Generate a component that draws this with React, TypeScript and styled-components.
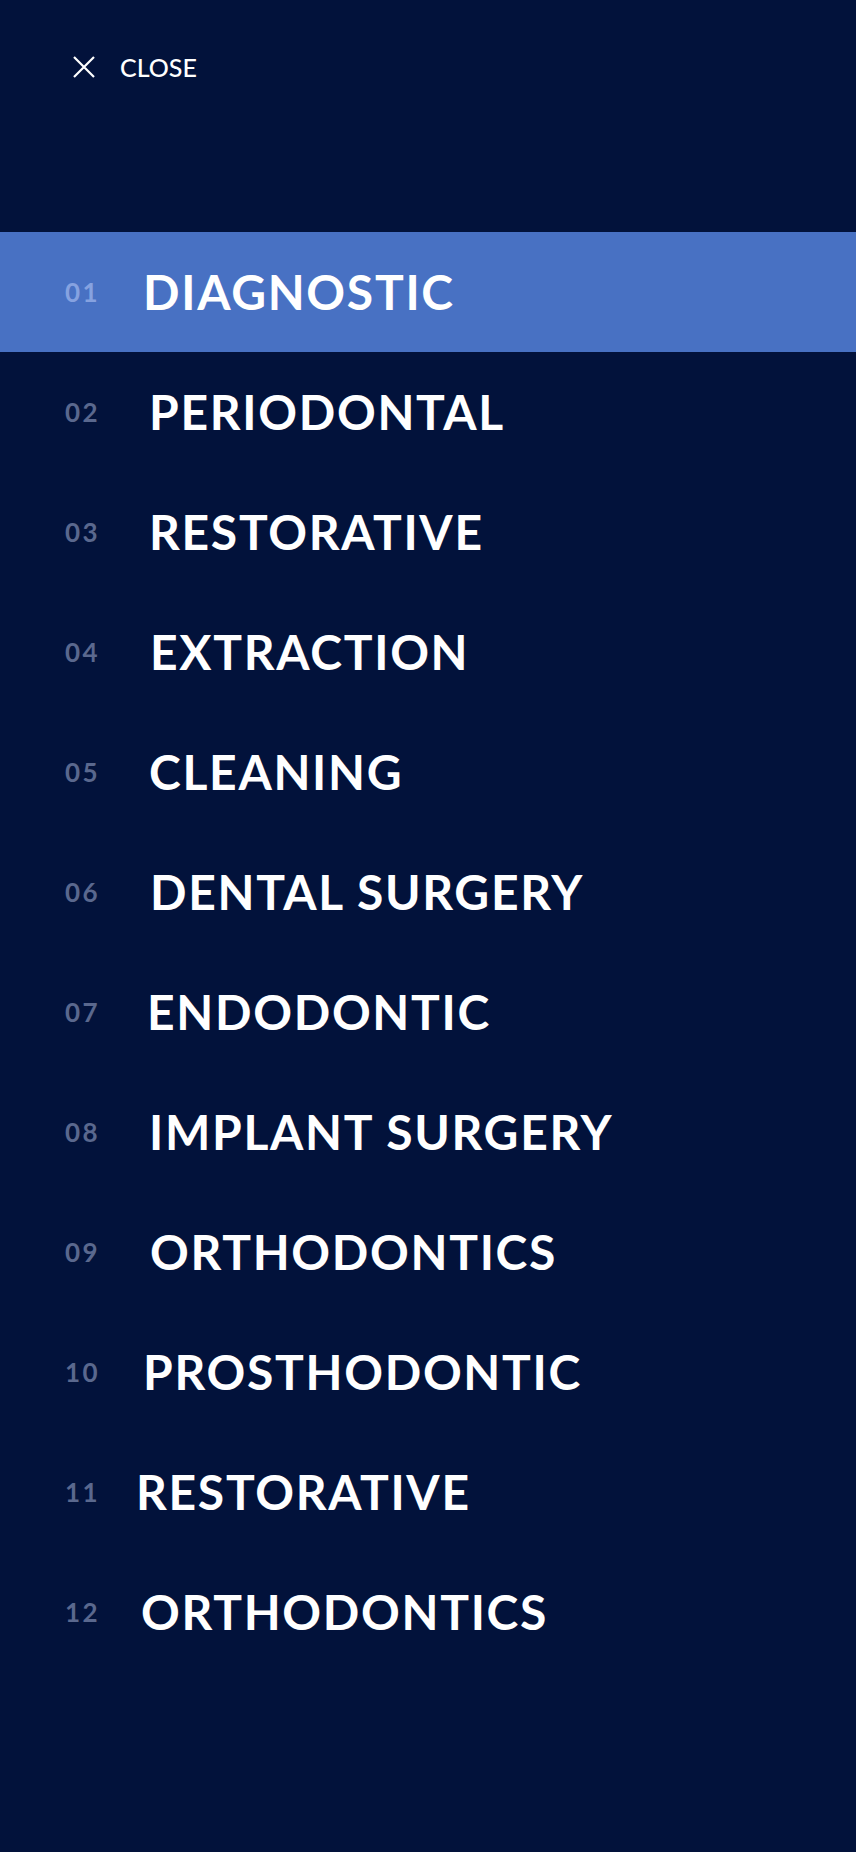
import React from "react";
import styled, { createGlobalStyle } from "styled-components";

const GlobalStyle = createGlobalStyle`
  html, body {
    margin: 0;
    padding: 0;
    background: #02123b;
  }
  * {
    box-sizing: border-box;
  }
`;

const Menu = styled.div`
  width: 856px;
  min-height: 1852px;
  background: #02123b;
  color: #ffffff;
  font-family: Lato, "Noto Sans", sans-serif;
`;

const TopBar = styled.div`
  height: 232px;
  padding: 56px 0 0 73px;
`;

const CloseButton = styled.button`
  display: flex;
  align-items: center;
  gap: 25px;
  background: none;
  border: none;
  padding: 0;
  color: #ffffff;
  font-family: Lato, "Noto Sans", sans-serif;
  font-size: 25px;
  font-weight: 500;
  height: 22px;
  cursor: pointer;
`;

const List = styled.ul`
  list-style: none;
  margin: 0;
  padding: 0;
`;

const Row = styled.li<{ $active?: boolean }>`
  display: flex;
  align-items: center;
  height: 120px;
  padding-left: 65px;
  background: ${(p) => (p.$active ? "#4871c3" : "transparent")};
`;

const Num = styled.span<{ $active?: boolean }>`
  width: 80px;
  flex-shrink: 0;
  font-size: 26px;
  font-weight: 700;
  letter-spacing: 2.5px;
  color: ${(p) => (p.$active ? "#86a2e0" : "#5a688e")};
`;

const Label = styled.span<{ $shift: number }>`
  margin-left: ${(p) => p.$shift}px;
  font-size: 48px;
  font-weight: 700;
  letter-spacing: 1.7px;
  line-height: 1;
  white-space: nowrap;
`;

const items = [
  { label: "DIAGNOSTIC", shift: -2 },
  { label: "PERIODONTAL", shift: 4 },
  { label: "RESTORATIVE", shift: 4 },
  { label: "EXTRACTION", shift: 5 },
  { label: "CLEANING", shift: 4 },
  { label: "DENTAL SURGERY", shift: 5 },
  { label: "ENDODONTIC", shift: 2 },
  { label: "IMPLANT SURGERY", shift: 4 },
  { label: "ORTHODONTICS", shift: 5 },
  { label: "PROSTHODONTIC", shift: -2 },
  { label: "RESTORATIVE", shift: -9 },
  { label: "ORTHODONTICS", shift: -4 },
];

export default function App() {
  return (
    <Menu>
      <GlobalStyle />
      <TopBar>
        <CloseButton>
          <svg width="22" height="22" viewBox="0 0 22 22" fill="none">
            <path d="M1 1L21 21M21 1L1 21" stroke="#ffffff" strokeWidth="2.2" />
          </svg>
          CLOSE
        </CloseButton>
      </TopBar>
      <List>
        {items.map((item, i) => (
          <Row key={i} $active={i === 0}>
            <Num $active={i === 0}>{String(i + 1).padStart(2, "0")}</Num>
            <Label $shift={item.shift}>{item.label}</Label>
          </Row>
        ))}
      </List>
    </Menu>
  );
}
